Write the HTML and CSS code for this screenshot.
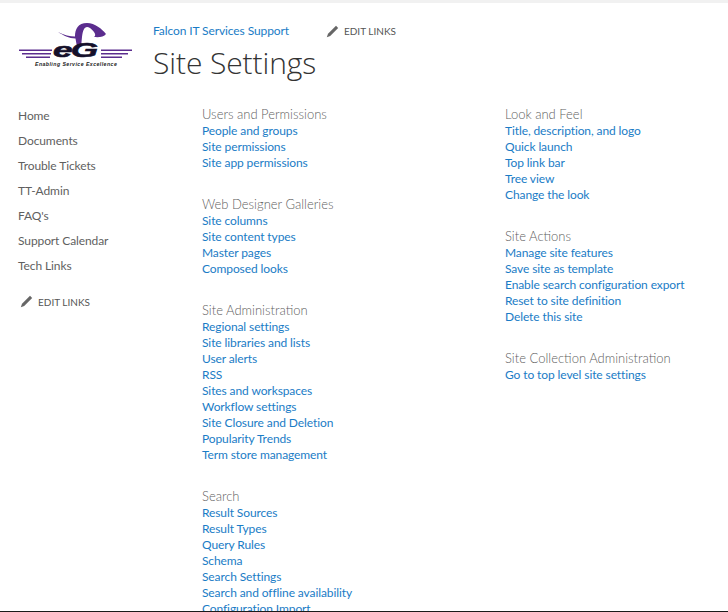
FILE: index.html
```html
<!DOCTYPE html>
<html lang="en">
<head>
<meta charset="utf-8">
<title>Site Settings</title>
<link rel="stylesheet" href="styles.css">
</head>
<body>
<div class="topstrip"></div>
<header class="header">
  <div class="logo">
    <svg class="logo-art" width="116" height="50" viewBox="0 0 116 50">
      <path d="M40 9 C46 12 52 13.5 57 13.5 C57 6 60 0 69 0 C77 0 84 6 88 11 C86 14 81 14.5 76 14 C79 12 76 8 72 5 C67 2 65 6 64 14 L63 24 L59 24 L57.5 15.5 C51 15.5 45 12 40 9 Z" fill="#5b2d8e"/>
      <g fill="#5b2d8e">
        <rect x="1" y="26.5" width="33" height="1.5"/><rect x="4" y="30" width="29" height="1.5"/><rect x="8" y="33.5" width="24" height="1.5"/>
        <rect x="83" y="26.5" width="31" height="1.5"/><rect x="83" y="30" width="27" height="1.5"/><rect x="83" y="33.5" width="21" height="1.5"/>
      </g>
    </svg>
    <span class="logo-mark">eG</span>
    <span class="logo-tag">Enabling Service Excellence</span>
  </div>
  <div class="titles">
    <div class="crumb-row">
      <a class="link" href="#">Falcon IT Services Support</a>
      <span class="edit edit-top">
        <svg class="pencil" width="13" height="13" viewBox="0 0 13 13"><path d="M10 0.8 L12.2 3 L4.2 11 L0.8 12.2 L2 8.8 Z" fill="#666"/></svg>
        EDIT LINKS
      </span>
    </div>
    <h1 class="title">Site Settings</h1>
  </div>
</header>
<main class="main">
  <nav class="nav">
    <a href="#">Home</a>
    <a href="#">Documents</a>
    <a href="#">Trouble Tickets</a>
    <a href="#">TT-Admin</a>
    <a href="#">FAQ's</a>
    <a href="#">Support Calendar</a>
    <a href="#">Tech Links</a>
    <span class="edit edit-nav">
      <svg class="pencil" width="13" height="13" viewBox="0 0 13 13"><path d="M10 0.8 L12.2 3 L4.2 11 L0.8 12.2 L2 8.8 Z" fill="#666"/></svg>
      EDIT LINKS
    </span>
  </nav>
  <div class="col col-a">
    <section class="group">
      <h2>Users and Permissions</h2>
      <a href="#">People and groups</a>
      <a href="#">Site permissions</a>
      <a href="#">Site app permissions</a>
    </section>
    <section class="group">
      <h2>Web Designer Galleries</h2>
      <a href="#">Site columns</a>
      <a href="#">Site content types</a>
      <a href="#">Master pages</a>
      <a href="#">Composed looks</a>
    </section>
    <section class="group">
      <h2>Site Administration</h2>
      <a href="#">Regional settings</a>
      <a href="#">Site libraries and lists</a>
      <a href="#">User alerts</a>
      <a href="#">RSS</a>
      <a href="#">Sites and workspaces</a>
      <a href="#">Workflow settings</a>
      <a href="#">Site Closure and Deletion</a>
      <a href="#">Popularity Trends</a>
      <a href="#">Term store management</a>
    </section>
    <section class="group">
      <h2>Search</h2>
      <a href="#">Result Sources</a>
      <a href="#">Result Types</a>
      <a href="#">Query Rules</a>
      <a href="#">Schema</a>
      <a href="#">Search Settings</a>
      <a href="#">Search and offline availability</a>
      <a href="#">Configuration Import</a>
    </section>
  </div>
  <div class="col col-b">
    <section class="group">
      <h2>Look and Feel</h2>
      <a href="#">Title, description, and logo</a>
      <a href="#">Quick launch</a>
      <a href="#">Top link bar</a>
      <a href="#">Tree view</a>
      <a href="#">Change the look</a>
    </section>
    <section class="group">
      <h2>Site Actions</h2>
      <a href="#">Manage site features</a>
      <a href="#">Save site as template</a>
      <a href="#">Enable search configuration export</a>
      <a href="#">Reset to site definition</a>
      <a href="#">Delete this site</a>
    </section>
    <section class="group">
      <h2>Site Collection Administration</h2>
      <a href="#">Go to top level site settings</a>
    </section>
  </div>
</main>
<div class="bottomline"></div>
</body>
</html>
```
FILE: styles.css
```css
html, body {
  margin: 0;
  padding: 0;
  height: 612px;
  overflow: hidden;
  background: #fff;
}
body {
  font-family: "Lato", "Open Sans", sans-serif;
  font-size: 12px;
  letter-spacing: -0.1px;
  color: #444;
}
a {
  text-decoration: none;
  color: #1a7cc6;
}
.topstrip {
  height: 3px;
  background: #f1f1f1;
}
.header {
  display: flex;
  height: 97px;
  padding-left: 18px;
}
.logo {
  position: relative;
  width: 116px;
  height: 50px;
  margin-top: 20px;
  flex: none;
  letter-spacing: 0;
}
.logo-art {
  display: block;
}
.logo-mark {
  position: absolute;
  left: 35px;
  top: 17px;
  font: italic 900 20px/20px "Liberation Sans", sans-serif;
  letter-spacing: -1px;
  color: #15102a;
  -webkit-text-stroke: 0.6px #15102a;
  transform: scaleX(1.76);
  transform-origin: left center;
}
.logo-tag {
  position: absolute;
  left: 17px;
  top: 37px;
  font: italic 700 5.2px/8px "Liberation Sans", sans-serif;
  letter-spacing: 0.45px;
  color: #222;
  white-space: nowrap;
}
.titles {
  margin-left: 19px;
}
.crumb-row {
  display: flex;
  align-items: center;
  height: 18px;
  margin-top: 18px;
}
.edit {
  display: flex;
  align-items: center;
  gap: 5px;
  font-size: 10px;
  letter-spacing: 0;
  color: #555;
}
.edit-top {
  margin: 2px 0 0 37px;
}
.title {
  margin: 3px 0 0;
  font-family: "Open Sans", sans-serif;
  font-size: 30px;
  line-height: 42px;
  font-weight: 300;
  letter-spacing: -0.1px;
  color: #333;
}
.main {
  display: flex;
  align-items: flex-start;
}
.nav {
  width: 202px;
  padding-left: 18px;
  flex: none;
  box-sizing: border-box;
  display: flex;
  flex-direction: column;
  padding-top: 6px;
}
.nav a {
  height: 25px;
  line-height: 20px;
  color: #5f5f5f;
  white-space: nowrap;
}
.edit-nav {
  margin: 14px 0 0 2px;
}
.col {
  padding-top: 4px;
}
.col-a {
  width: 303px;
  flex: none;
}
.group {
  display: flex;
  flex-direction: column;
  margin-bottom: 23px;
}
.group h2 {
  margin: 0;
  padding-top: 2px;
  font-size: 13px;
  line-height: 17px;
  font-weight: 300;
  letter-spacing: 0;
  color: #5f5f5f;
  white-space: nowrap;
}
.group a {
  height: 16px;
  line-height: 16px;
  white-space: nowrap;
}
.bottomline {
  position: fixed;
  left: 0;
  right: 0;
  bottom: 0;
  height: 1px;
  background: #1a1a1a;
}
```
